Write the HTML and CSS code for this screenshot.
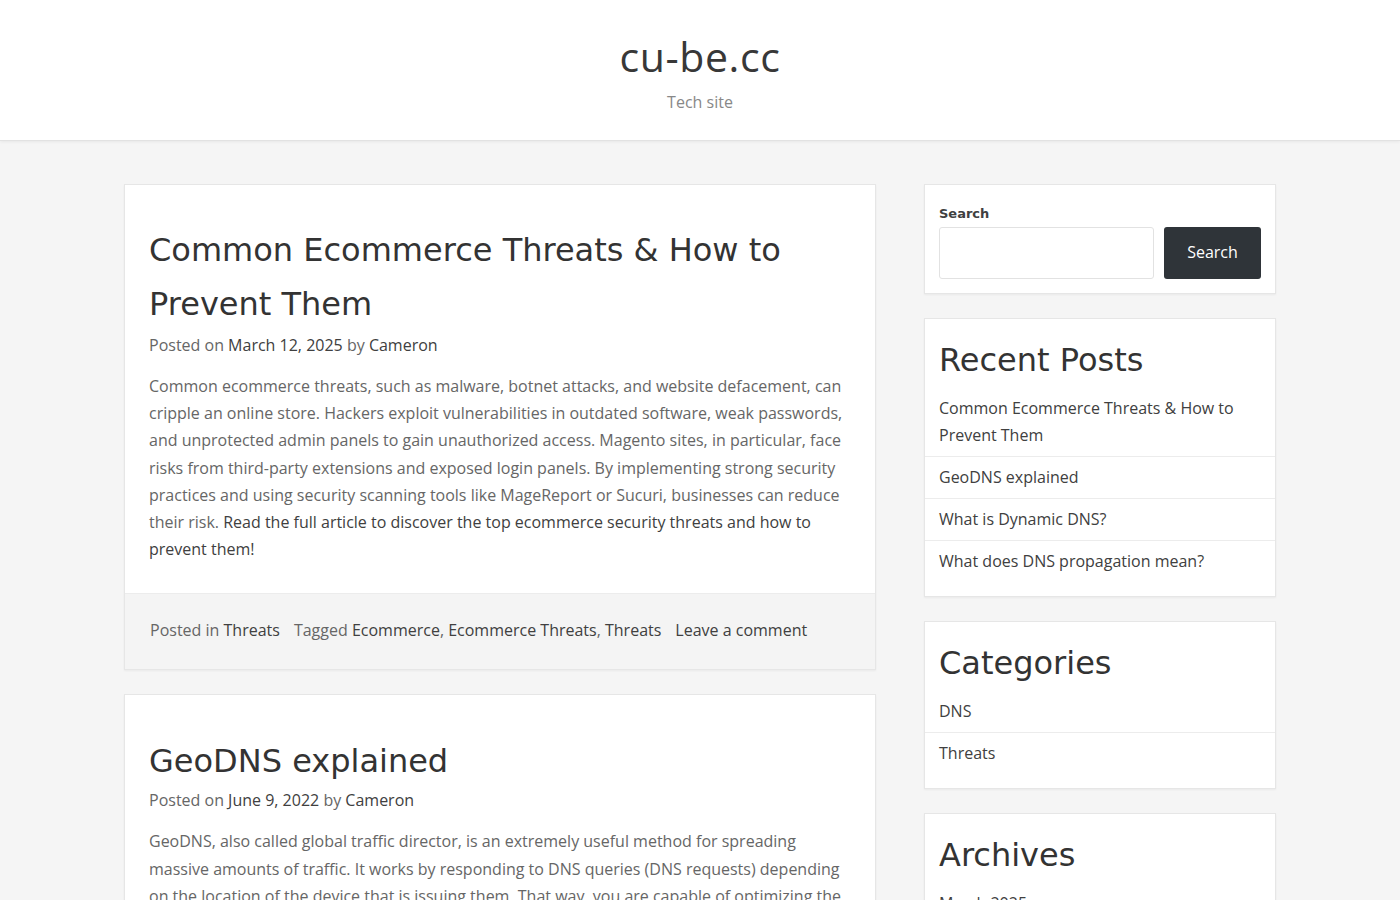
FILE: index.html
```html
<!DOCTYPE html>
<html lang="en">
<head>
<meta charset="utf-8">
<title>cu-be.cc – Tech site</title>
<link rel="stylesheet" href="styles.css">
</head>
<body>
<header class="site-header">
  <div class="site-title">cu-be.cc</div>
  <div class="site-desc">Tech site</div>
</header>
<div class="container">
  <main class="main">
    <article class="post">
      <div class="post-body">
        <h2 class="post-title">Common Ecommerce Threats &amp; How to Prevent Them</h2>
        <div class="meta">Posted on <a href="#">March 12, 2025</a> by <a href="#">Cameron</a></div>
        <p class="excerpt">Common ecommerce threats, such as malware, botnet attacks, and website defacement, can cripple an online store. Hackers exploit vulnerabilities in outdated software, weak passwords, and unprotected admin panels to gain unauthorized access. Magento sites, in particular, face risks from third-party extensions and exposed login panels. By implementing strong security practices and using security scanning tools like MageReport or Sucuri, businesses can reduce their risk. <a href="#">Read the full article to discover the top ecommerce security threats and how to prevent them!</a></p>
      </div>
      <footer class="post-footer">
        <span class="fitem">Posted in <a href="#">Threats</a></span>
        <span class="fitem">Tagged <a href="#">Ecommerce</a>, <a href="#">Ecommerce Threats</a>, <a href="#">Threats</a></span>
        <span class="fitem"><a href="#">Leave a comment</a></span>
      </footer>
    </article>
    <article class="post">
      <div class="post-body second">
        <h2 class="post-title">GeoDNS explained</h2>
        <div class="meta">Posted on <a href="#">June 9, 2022</a> by <a href="#">Cameron</a></div>
        <p class="excerpt">GeoDNS, also called global traffic director, is an extremely useful method for spreading massive amounts of traffic. It works by responding to DNS queries (DNS requests) depending on the location of the device that is issuing them. That way, you are capable of optimizing the performance of your website and providing a better experience for your visitors.</p>
      </div>
    </article>
  </main>
  <aside class="sidebar">
    <section class="widget search-widget">
      <label class="search-label">Search</label>
      <div class="search-row">
        <input class="search-input" type="text">
        <button class="search-btn">Search</button>
      </div>
    </section>
    <section class="widget">
      <h2 class="widget-title">Recent Posts</h2>
      <ul class="wlist">
        <li><a href="#">Common Ecommerce Threats &amp; How to Prevent Them</a></li>
        <li><a href="#">GeoDNS explained</a></li>
        <li><a href="#">What is Dynamic DNS?</a></li>
        <li><a href="#">What does DNS propagation mean?</a></li>
      </ul>
    </section>
    <section class="widget">
      <h2 class="widget-title">Categories</h2>
      <ul class="wlist">
        <li><a href="#">DNS</a></li>
        <li><a href="#">Threats</a></li>
      </ul>
    </section>
    <section class="widget">
      <h2 class="widget-title">Archives</h2>
      <ul class="wlist">
        <li><a href="#">March 2025</a></li>
        <li><a href="#">June 2022</a></li>
        <li><a href="#">May 2022</a></li>
      </ul>
    </section>
  </aside>
</div>
</body>
</html>
```

FILE: styles.css
```css
* { box-sizing: border-box; }
html, body { margin: 0; padding: 0; }
body {
  background: #f5f5f5;
  font-family: "Open Sans", "Liberation Sans", sans-serif;
  font-size: 16px;
  color: #666;
  line-height: 1.7;
}
a { color: #404040; text-decoration: none; }

.site-header {
  background: #fff;
  height: 141px;
  border-bottom: 1px solid #e2e2e2;
  box-shadow: 0 1px 3px rgba(0,0,0,0.06);
  text-align: center;
  padding-top: 27px;
}
.site-title {
  font-family: "Open Sans", sans-serif;
  font-size: 41px;
  line-height: 58px;
  color: #383838;
  letter-spacing: 0.6px;
}
.site-desc {
  font-size: 16px;
  line-height: 24px;
  color: #888;
  margin-top: 5px;
}

.container {
  width: 1152px;
  margin: 43px auto 0;
  display: flex;
  gap: 48px;
  align-items: flex-start;
}
.main { width: 752px; flex: none; }
.sidebar { width: 352px; flex: none; }

.post {
  background: #fff;
  border: 1px solid #e6e6e6;
  box-shadow: 0 1px 2px rgba(0,0,0,0.05);
  margin-bottom: 24px;
}
.post-body { padding: 38px 24px 30px; }
.post-body.second { padding-top: 39px; }
.post-title {
  font-family: "DejaVu Sans", sans-serif;
  font-weight: normal;
  font-size: 32px;
  line-height: 54px;
  color: #333;
  margin: 0;
}
.meta { font-size: 16px; line-height: 27px; color: #666; margin-top: 1px; }
.second .meta { margin-top: -1px; }
.excerpt {
  margin: 14px 0 0;
  line-height: 27.2px;
  color: #666;
}
.post-footer {
  background: #f4f4f4;
  border-top: 1px solid #ececec;
  padding: 23px 25px 25px;
  line-height: 27px;
  display: flex;
  gap: 14px;
  color: #666;
}

.widget {
  background: #fff;
  border: 1px solid #e6e6e6;
  box-shadow: 0 1px 2px rgba(0,0,0,0.05);
  margin-bottom: 24px;
  padding: 0 14px 14px;
}
.search-widget { padding: 17px 14px 14px; }
.search-label {
  display: block;
  font-family: "DejaVu Sans", sans-serif;
  font-weight: bold;
  font-size: 13px;
  line-height: 23px;
  color: #404040;
}
.search-row { display: flex; gap: 10px; margin-top: 2px; }
.search-input {
  width: 215px;
  height: 52px;
  border: 1px solid #e2e2e2;
  border-radius: 3px;
  background: #fff;
}
.search-btn {
  flex: 1;
  height: 52px;
  background: #2f3439;
  color: #fff;
  border: none;
  border-radius: 3px;
  font-family: "Open Sans", sans-serif;
  font-size: 16px;
  padding: 0 0 2px;
}

.widget-title {
  font-family: "DejaVu Sans", sans-serif;
  font-weight: normal;
  font-size: 32px;
  line-height: 40px;
  color: #333;
  margin: 0;
  padding-top: 21px;
  padding-bottom: 15px;
}
.wlist { list-style: none; margin: 0 -14px; padding: 0; }
.wlist li {
  padding: 7px 14px 7px;
  line-height: 27px;
  border-top: 1px solid #ececec;
}
.wlist li:first-child { border-top: none; padding-top: 0; }
```
